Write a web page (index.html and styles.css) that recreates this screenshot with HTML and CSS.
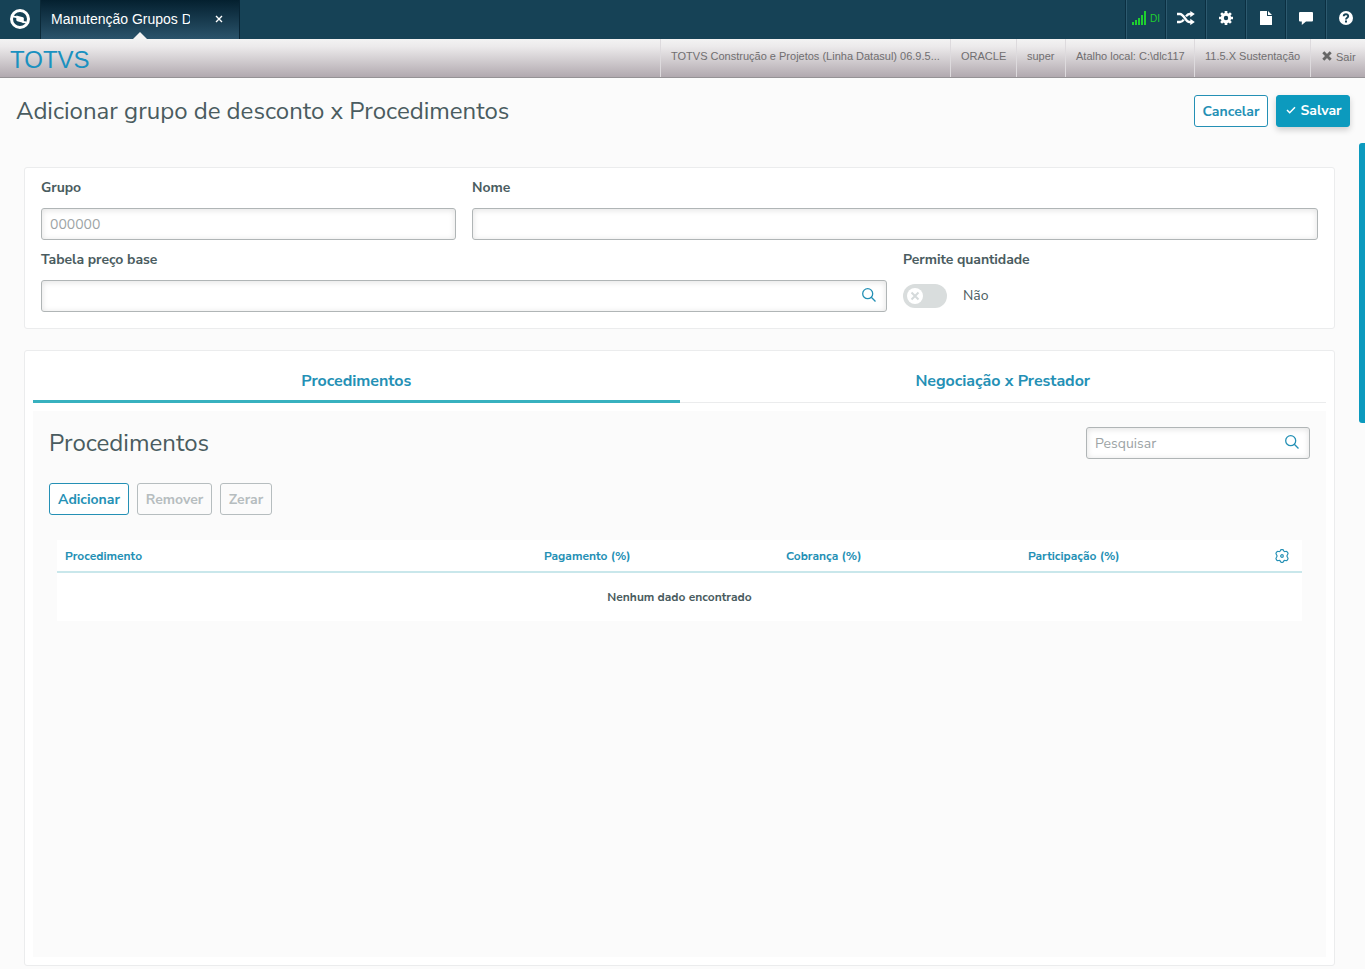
FILE: index.html
```html
<!doctype html>
<html lang="pt-BR">
<head>
	<meta charset="utf-8">
	<title>Manutenção Grupos Desconto</title>
	<link rel="stylesheet" href="styles.css">
</head>
<body>
	<nav class="topbar">
		<div class="home">
			<svg width="22" height="22" viewBox="0 0 22 22">
				<circle cx="11" cy="11" r="8.500" fill="none" stroke="#fff" stroke-width="3"/>
				<path d="M7.300 7.500L14 9.300q.8.300.8 1.100V15L8.300 13.200q-1-.300-1-1.200z" fill="#fff"/>
				<path d="M4 8.300l4.500 1M13.500 14l4 .3" stroke="#fff" stroke-width="1.800"/>
			</svg>
		</div>
		<div class="tab">
			<span class="tab-name">Manutenção Grupos D</span>
			<span class="tab-close">
				<svg width="8" height="8" viewBox="0 0 8 8"><path d="M1 1l6 6M7 1L1 7" stroke="#fff" stroke-width="1.400"/></svg>
			</span>
		</div>
		<div class="tools">
			<div class="tool signal">
				<svg width="14" height="14" viewBox="0 0 14 14" fill="#1fd02f"><path d="M0 11h2v3H0zM3 9h2v5H3zM6 7h2v7H6zM9 4h2v10H9zM12 0h2v14h-2z"/></svg>
				<span>DI</span>
			</div>
			<div class="tool">
				<svg width="18" height="14" viewBox="0 0 18 14"><path d="M0 3h3C7 3 8.500 11 12.500 11H14M0 11h3C4.800 11 5.800 10 6.700 8.600M9 5.400C10 4 11 3 12.500 3H14" fill="none" stroke="#fff" stroke-width="2.300"/><path d="M13.300 0l4.500 3.100-4.500 3.200zM13.300 7.800l4.500 3.100-4.500 3.200z" fill="#fff"/></svg>
			</div>
			<div class="tool">
				<svg width="14" height="14" viewBox="0 0 14 14"><circle cx="7" cy="7" r="3.700" fill="none" stroke="#fff" stroke-width="3"/><path d="M7 0v3M7 11v3M0 7h3M11 7h3M2.100 2.100l2 2M9.900 9.900l2 2M2.100 11.900l2-2M9.900 4.100l2-2" stroke="#fff" stroke-width="2.700"/></svg>
			</div>
			<div class="tool">
				<svg width="12" height="14" viewBox="0 0 12 14" fill="#fff"><path d="M0 .5Q0 0 .5 0H7v4.500q0 .5.5.5H12v8.500q0 .5-.5.5H.5q-.5 0-.5-.5zM8 0l4 4H8z"/></svg>
			</div>
			<div class="tool">
				<svg width="14" height="13" viewBox="0 0 14 13" fill="#fff"><path d="M1 0h12q1 0 1 1v7.500q0 1-1 1H7L2.800 13V9.500H1q-1 0-1-1V1q0-1 1-1z"/></svg>
			</div>
			<div class="tool">
				<svg width="14" height="14" viewBox="0 0 14 14"><circle cx="7" cy="7" r="7" fill="#fff"/><path d="M4.700 5.200C4.900 2.500 9.300 2.700 9.200 5.200C9.100 6.800 7 6.700 7 8.600" fill="none" stroke="#164256" stroke-width="1.900"/><path d="M6 9.600h2v1.900H6z" fill="#164256"/></svg>
			</div>
		</div>
	</nav>

	<div class="infobar">
		<span class="brand">TOTVS</span>
		<ul class="info">
			<li class="company">TOTVS Construção e Projetos (Linha Datasul) 06.9.5...</li>
			<li class="db">ORACLE</li>
			<li class="user">super</li>
			<li class="path">Atalho local: C:\dlc117</li>
			<li class="version">11.5.X Sustentação</li>
			<li class="exit"><svg width="10" height="10" viewBox="0 0 10 10"><path d="M1.300 1.300l7.400 7.400M8.700 1.300L1.300 8.700" stroke="#666" stroke-width="2.900"/></svg> Sair</li>
		</ul>
	</div>

	<main class="page">
		<header class="page-header">
			<h1>Adicionar grupo de desconto x Procedimentos</h1>
			<div class="page-actions">
				<button class="btn cancel">Cancelar</button>
				<button class="btn primary"><svg width="10" height="8" viewBox="0 0 10 8"><path d="M1 4l2.700 2.700L9 1.300" fill="none" stroke="#fff" stroke-width="1.500"/></svg>Salvar</button>
			</div>
		</header>

		<section class="card form">
			<div class="row">
				<div class="field group">
					<label>Grupo</label>
					<div class="input"><span class="placeholder">000000</span></div>
				</div>
				<div class="field grow">
					<label>Nome</label>
					<div class="input"></div>
				</div>
			</div>
			<div class="row">
				<div class="field table-base">
					<label>Tabela preço base</label>
					<div class="input">
						<svg class="search" width="16" height="16" viewBox="0 0 16 16"><circle cx="6.700" cy="6.700" r="5"/><path d="M10.300 10.300l4.200 4.200"/></svg>
					</div>
				</div>
				<div class="field grow">
					<label>Permite quantidade</label>
					<div class="switch-line">
						<div class="switch"><div class="knob"><svg width="10" height="10" viewBox="0 0 10 10"><path d="M1.500 1.500l7 7M8.500 1.500l-7 7" stroke="#d5dadb" stroke-width="2"/></svg></div></div>
						<span class="switch-label">Não</span>
					</div>
				</div>
			</div>
		</section>

		<section class="card details">
			<div class="tabs">
				<div class="tabs-item active"><span>Procedimentos</span></div>
				<div class="tabs-item"><span>Negociação x Prestador</span></div>
			</div>
			<div class="panel">
				<div class="panel-header">
					<h2>Procedimentos</h2>
					<div class="input filter">
						<span class="placeholder">Pesquisar</span>
						<svg class="search" width="16" height="16" viewBox="0 0 16 16"><circle cx="6.700" cy="6.700" r="5"/><path d="M10.300 10.300l4.200 4.200"/></svg>
					</div>
				</div>
				<div class="panel-actions">
					<button class="btn add">Adicionar</button>
					<button class="btn remove" disabled>Remover</button>
					<button class="btn clear" disabled>Zerar</button>
				</div>
				<table class="grid">
					<thead>
						<tr>
							<th class="col-proc">Procedimento</th>
							<th class="col-value">Pagamento (%)</th>
							<th class="col-value">Cobrança (%)</th>
							<th>Participação (%)</th>
							<th class="col-gear">
								<svg width="14" height="14" viewBox="0 0 14 14" fill="none" stroke="#2490b5" stroke-width="1.200"><path d="M5.400 1.600Q5.600.7 6.400.7H7.600Q8.400.7 8.600 1.600Q9 2.800 10.200 2.500L11.300 2.300Q12 2.400 12.500 3.300L13 4.200Q13.200 5 12.500 5.600Q11.300 7 12.500 8.400Q13.200 9 13 9.800L12.500 10.700Q12 11.600 11.300 11.700L10.200 11.500Q9 11.200 8.600 12.400Q8.400 13.300 7.600 13.300H6.400Q5.600 13.300 5.400 12.400Q5 11.200 3.800 11.500L2.700 11.700Q2 11.600 1.500 10.700L1 9.800Q.8 9 1.500 8.400Q2.700 7 1.500 5.600Q.8 5 1 4.200L1.500 3.300Q2 2.400 2.700 2.300L3.800 2.500Q5 2.800 5.400 1.600Z"/><circle cx="7" cy="7" r="1.300"/></svg>
							</th>
						</tr>
					</thead>
					<tbody>
						<tr><td colspan="5">Nenhum dado encontrado</td></tr>
					</tbody>
				</table>
			</div>
		</section>
		<div class="scroll-thumb"></div>
	</main>
</body>
</html>
```
FILE: styles.css
```css
* {
	box-sizing: border-box;
}

html {
	background: #fff;
}

body {
	margin: 0;
	height: 971px;
	overflow: hidden;
	font-family: "Nunito Sans", "Open Sans", sans-serif;
	font-size: 14px;
	color: #4a5c60;
}

svg {
	display: block;
	flex: none;
}

/* top bar */
.topbar {
	display: flex;
	height: 39px;
	background: #164256;
	font-family: "Liberation Sans", Arial, sans-serif;
}

.home {
	display: flex;
	align-items: center;
	width: 40px;
	padding: 0 0 1px 9px;
}

.tab {
	position: relative;
	display: flex;
	align-items: center;
	width: 200px;
	padding: 0 0 1px 11px;
	background: linear-gradient(#04202f, #2a536b);
	border-right: 1px solid #082434;
	border-left: 1px solid #0b2938;
	color: #fff;
}

.tab::after {
	content: "";
	position: absolute;
	left: 92px;
	bottom: 0;
	border: 7px solid transparent;
	border-top: 0;
	border-bottom-color: #f4f4f4;
}

.tab-name {
	width: 139px;
	overflow: hidden;
	white-space: nowrap;
	margin-left: -1px;
}

.tab-close {
	margin-left: 25px;
}

.tools {
	display: flex;
	margin-left: auto;
}

.tool {
	display: flex;
	align-items: center;
	justify-content: center;
	width: 40px;
	padding: 0 1px 3px 0;
	border-left: 1px solid #2d5a6f;
	box-shadow: -1px 0 #0b2f41;
}

.tool:last-child {
	width: 39px;
	padding-right: 0;
}

.signal {
	gap: 4px;
	color: #1fd02f;
	font-size: 10px;
}

/* info bar */
.infobar {
	display: flex;
	justify-content: space-between;
	height: 39px;
	background: linear-gradient(#f3f3f3, #eceaeb 20%, #b1a9af);
	border-bottom: 1px solid #959295;
	font-family: "Liberation Sans", Arial, sans-serif;
}

.brand {
	padding: 7px 0 0 10px;
	font-size: 24px;
	line-height: 28px;
	color: #1a91c0;
}

.info {
	display: flex;
	margin: 0;
	padding: 0;
	list-style: none;
	font-size: 11px;
	line-height: 12px;
	color: #706e70;
	white-space: nowrap;
}

.info li {
	padding: 11px 0 0 10px;
	border-left: 1px solid #dddadd;
}

.company { width: 290px; }
.db { width: 66px; }
.user { width: 49px; }
.path { width: 129px; }
.version { width: 116px; }

.info .exit {
	display: flex;
	gap: 4px;
	width: 55px;
	padding-left: 11px;
	padding-top: 12px;
}

/* page */
.page {
	position: relative;
	height: 891px;
	padding: 0 30px 0 24px;
	background: #fbfbfb;
}

.page-header {
	display: flex;
	justify-content: space-between;
	height: 89px;
	margin: 0 -15px 0 -8px;
	padding-top: 17px;
}

h1, h2 {
	margin: 0;
	font-size: 24px;
	font-weight: 400;
	line-height: 32px;
	white-space: nowrap;
}

.page-actions,
.panel-actions {
	display: flex;
	gap: 8px;
}

.btn {
	display: flex;
	align-items: center;
	justify-content: center;
	height: 32px;
	padding: 0;
	background: #fff;
	border: 1px solid #2490b5;
	border-radius: 3px;
	font: 700 14px "Nunito Sans", "Open Sans", sans-serif;
	color: #2490b5;
}

.btn:disabled {
	background: transparent;
	border-color: #b6bdbf;
	color: #b6bdbf;
}

.cancel, .primary { width: 74px; }
.add { width: 80px; }
.remove { width: 75px; }
.clear { width: 52px; }

.btn.primary {
	gap: 4px;
	padding: 0 0 2px 2px;
	background: #0c9abe;
	border-color: #0c9abe;
	box-shadow: 0 3px 6px rgba(0, 0, 0, .18);
	color: #fff;
}

.card {
	background: #fff;
	border: 1px solid #ebeced;
	border-radius: 3px;
}

.form {
	height: 162px;
	padding: 8px 16px;
}

.row {
	display: flex;
	gap: 16px;
	height: 72px;
}

.group { width: 415px; }
.table-base { width: 846px; }
.grow { flex: 1; }

label {
	display: block;
	height: 32px;
	font-weight: 700;
	line-height: 24px;
	letter-spacing: -.06px;
}

.input {
	display: flex;
	align-items: center;
	height: 32px;
	padding: 0 9px 0 8px;
	background: #fff;
	border: 1px solid #b0b5b6;
	border-radius: 3px;
	box-shadow: inset 0 1px 6px rgba(0, 0, 0, .12);
}

.placeholder {
	color: #9da4a6;
}

.search {
	margin: 0 0 2px auto;
	fill: none;
	stroke: #2490b5;
	stroke-width: 1.3;
}

.switch-line {
	display: flex;
	align-items: center;
	gap: 16px;
	height: 32px;
}

.switch-label {
	padding-bottom: 2px;
}

.switch {
	width: 44px;
	height: 24px;
	padding: 4px;
	background: #d9dddd;
	border-radius: 12px;
}

.knob {
	display: flex;
	align-items: center;
	justify-content: center;
	width: 16px;
	height: 16px;
	background: #fff;
	border-radius: 50%;
}

.details {
	height: 616px;
	margin-top: 21px;
	padding: 8px;
}

.tabs {
	display: flex;
	height: 44px;
	border-bottom: 1px solid #ebeced;
}

.tabs-item {
	flex: 1;
	height: 44px;
	font-size: 16px;
	font-weight: 700;
	line-height: 44px;
	letter-spacing: -.04px;
	text-align: center;
	color: #2490b5;
}

.active {
	border-bottom: 3px solid #38b1bf;
}

.panel {
	height: 546px;
	margin-top: 8px;
	padding: 16px;
	background: #fbfbfb;
}

.panel-header {
	display: flex;
	justify-content: space-between;
	height: 56px;
}

.filter {
	width: 224px;
}

.grid {
	width: 1245px;
	margin: 25px 0 0 8px;
	background: #fff;
	border-collapse: separate;
	border-spacing: 0;
	table-layout: fixed;
	font-size: 12px;
}

.grid th {
	height: 33px;
	padding: 0 8px;
	border-bottom: 2px solid #c9e7eb;
	font-weight: 700;
	text-align: left;
	color: #2490b5;
}

.col-proc { width: 479px; }
.col-value { width: 242px; }
.grid .col-gear { width: 40px; padding: 0 13px; }

.grid td {
	height: 48px;
	padding: 0;
	font-weight: 700;
	text-align: center;
}

.scroll-thumb {
	position: absolute;
	top: 65px;
	right: 0;
	width: 6px;
	height: 280px;
	background: #0c9abe;
	border-radius: 3px 0 0 3px;
}
```
